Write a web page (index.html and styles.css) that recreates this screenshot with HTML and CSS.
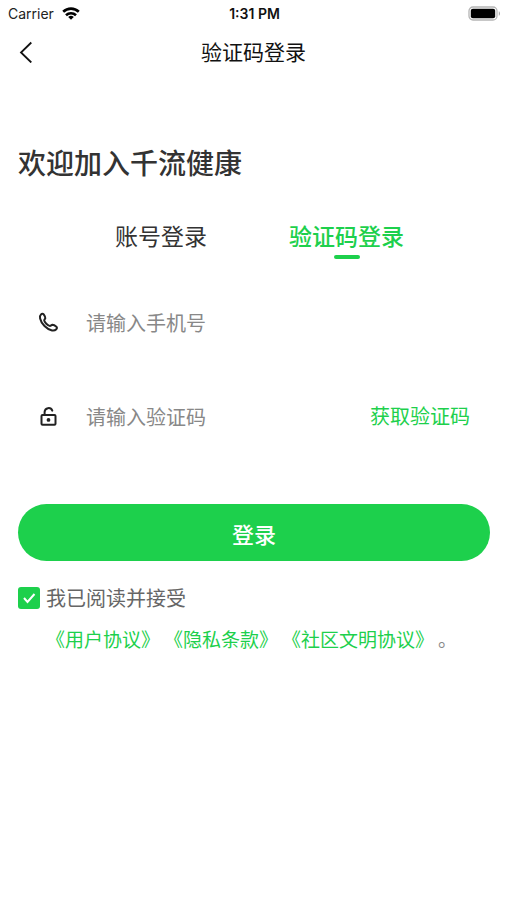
FILE: index.html
```html
<!DOCTYPE html>
<html lang="zh-CN">
<head>
  <meta charset="UTF-8">
  <meta name="viewport" content="width=device-width, initial-scale=1">
  <title>验证码登录</title>
  <link rel="stylesheet" href="styles.css">
</head>
<body>

  <!-- 状态栏 -->
  <div class="status-bar">
    <div class="carrier">
      <span>Carrier</span>
      <svg width="18" height="13" viewBox="0 0 18 13" fill="none" stroke="#000" stroke-width="2.6">
        <path d="M1.2 4.8a11.2 11.2 0 0 1 15.6 0"/>
        <path d="M4 8.300a7.2 7.2 0 0 1 10 0"/>
        <path d="M9 12.8L6.2 10.100a4 4 0 0 1 5.6 0z" fill="#000" stroke="none"/>
      </svg>
    </div>
    <span class="time">1:31 PM</span>
    <svg class="battery" width="33" height="15" viewBox="0 0 33 15">
      <rect x="1" y="1" width="28" height="13" rx="4" fill="#fff" stroke="#b5b5b5" stroke-width="1.3"/>
      <rect x="2.8" y="2.8" width="24.4" height="9.4" rx="2" fill="#000"/>
      <path d="M30.8 5.2c1.4.6 1.4 4 0 4.600z" fill="#999"/>
    </svg>
  </div>

  <!-- 导航栏 -->
  <header class="nav-bar">
    <button class="back-btn" type="button" aria-label="返回">
      <svg width="14" height="22" viewBox="0 0 14 22" fill="none" stroke="#111" stroke-width="1.8">
        <path d="M12.300 1.500L2 11.500l10.300 10"/>
      </svg>
    </button>
    <h1>验证码登录</h1>
  </header>

  <main class="login">
    <h2>欢迎加入千流健康</h2>

    <div class="tabs">
      <button class="tab" type="button">账号登录</button>
      <button class="tab active" type="button">验证码登录</button>
    </div>

    <form>
      <div class="field">
        <label for="phone" aria-label="手机号">
          <svg width="21" height="21" viewBox="0 0 21 21" fill="none" stroke="#222" stroke-width="2" stroke-linejoin="round">
            <path d="M3 2.400C3.800 1.500 5 1.500 5.700 2.400C6.600 3.700 7.400 4.900 7.300 6.100C7.200 7 6 7.600 6.200 8.600C6.700 10.500 9.500 13.400 11.600 13.900C12.800 14.200 13.300 12.900 14.400 12.800C15.800 12.900 17.300 13.800 18.400 14.700C19.200 15.500 19.100 16.600 18.300 17.300C17.200 18.400 15.800 18.800 14 18.500C8.700 17.400 3.300 11.800 2.100 6.500C1.700 4.900 2 3.300 3 2.400Z"/>
          </svg>
        </label>
        <input type="tel" id="phone" placeholder="请输入手机号">
      </div>

      <div class="field">
        <label for="code" aria-label="验证码">
          <svg width="21" height="21" viewBox="0 0 21 21" fill="none" stroke="#222" stroke-width="2" stroke-linecap="round">
            <rect x="3.500" y="9" width="14" height="9.800" rx="1"/>
            <path d="M6.600 8.800V5.900a4 4 0 0 1 7.700-1.300"/>
            <circle cx="10.500" cy="13.900" r="1.900" fill="#222" stroke="none"/>
          </svg>
        </label>
        <input type="text" id="code" placeholder="请输入验证码">
        <button class="code-btn" type="button">获取验证码</button>
      </div>

      <button class="submit-btn" type="button">登录</button>

      <!-- 协议 -->
      <div class="agree">
        <input type="checkbox" id="agree" checked>
        <label for="agree">我已阅读并接受</label>
      </div>
      <p class="links">
        <a href="#">《用户协议》</a>
        <a href="#">《隐私条款》</a>
        <a href="#">《社区文明协议》</a>
        <span>。</span>
      </p>
    </form>
  </main>

</body>
</html>
```

FILE: styles.css
```css
/* Reset */
* { margin: 0; padding: 0; box-sizing: border-box; }
body {
  font-family: "Noto Sans CJK SC", sans-serif;
  background: #fff;
  color: #333;
}
a { text-decoration: none; color: #1dd04c; }
button { font-family: inherit; background: none; border: none; cursor: pointer; }
input { font-family: inherit; border: none; outline: none; background: none; }
svg { display: block; }

/* 状态栏 */
.status-bar {
  display: grid;
  grid-template-columns: 1fr auto 1fr;
  align-items: center;
  height: 26px;
  padding: 0 6px 0 8px;
  font-family: Inter, sans-serif;
  font-size: 14px;
  color: #222;
}
.carrier { display: flex; align-items: center; gap: 8px; }
.time { font-weight: 600; color: #111; }
.battery { justify-self: end; }

/* 导航栏 */
.nav-bar {
  display: grid;
  grid-template-columns: 48px 1fr 48px;
  align-items: center;
  height: 52px;
}
.back-btn { padding: 8px 19px; }
.nav-bar h1 {
  padding-bottom: 3px;
  font-size: 21px;
  font-weight: 400;
  line-height: 32px;
  color: #111;
  text-align: center;
}

/* 登录表单 */
.login { padding: 64px 17px 40px 18px; }
.login h2 {
  font-size: 28px;
  font-weight: 500;
  line-height: 40px;
}
.tabs {
  display: flex;
  justify-content: center;
  gap: 82px;
  margin-top: 35px;
  padding-left: 11px;
}
.tab {
  position: relative;
  height: 42px;
  padding-bottom: 6px;
  font-size: 23px;
  line-height: 36px;
  color: #333;
}
.tab.active { font-weight: 500; color: #1dd04c; }
.tab.active::after {
  content: "";
  position: absolute;
  left: 50%;
  bottom: 0;
  width: 26px;
  height: 4px;
  margin-left: -13px;
  border-radius: 2px;
  background: #1dd04c;
}
form { margin-top: 29px; }
.field {
  display: flex;
  align-items: center;
  height: 68px;
  margin-bottom: 26px;
  padding: 0 20px;
}
.field label { flex: none; width: 48px; }
.field input {
  flex: 1;
  min-width: 0;
  height: 40px;
  font-size: 20px;
  color: #333;
}
.field input::placeholder { color: #888; }
.code-btn { font-size: 20px; line-height: 42px; color: #1dd04c; }
.submit-btn {
  display: block;
  width: 100%;
  height: 57px;
  margin-top: 54px;
  border-radius: 29px;
  background: #1dd04c;
  color: #fff;
  font-size: 22px;
  font-weight: 500;
  line-height: 54px;
}

/* 协议 */
.agree {
  display: flex;
  align-items: center;
  gap: 6px;
  margin-top: 22px;
  font-size: 20px;
  line-height: 30px;
  color: #666;
}
.agree input {
  appearance: none;
  width: 22px;
  height: 22px;
  border: 1px solid #bbb;
  border-radius: 3px;
}
.agree input:checked {
  border: none;
  background: #1dd04c url("data:image/svg+xml,%3Csvg xmlns='http://www.w3.org/2000/svg' viewBox='0 0 22 22'%3E%3Cpath d='M6 11l3.500 4L16.500 7' fill='none' stroke='white' stroke-width='2'/%3E%3C/svg%3E") center no-repeat;
}
.links {
  display: flex;
  flex-wrap: wrap;
  gap: 4px;
  margin-top: 11px;
  padding-left: 28px;
  font-size: 19px;
  line-height: 30px;
  color: #888;
}
```
